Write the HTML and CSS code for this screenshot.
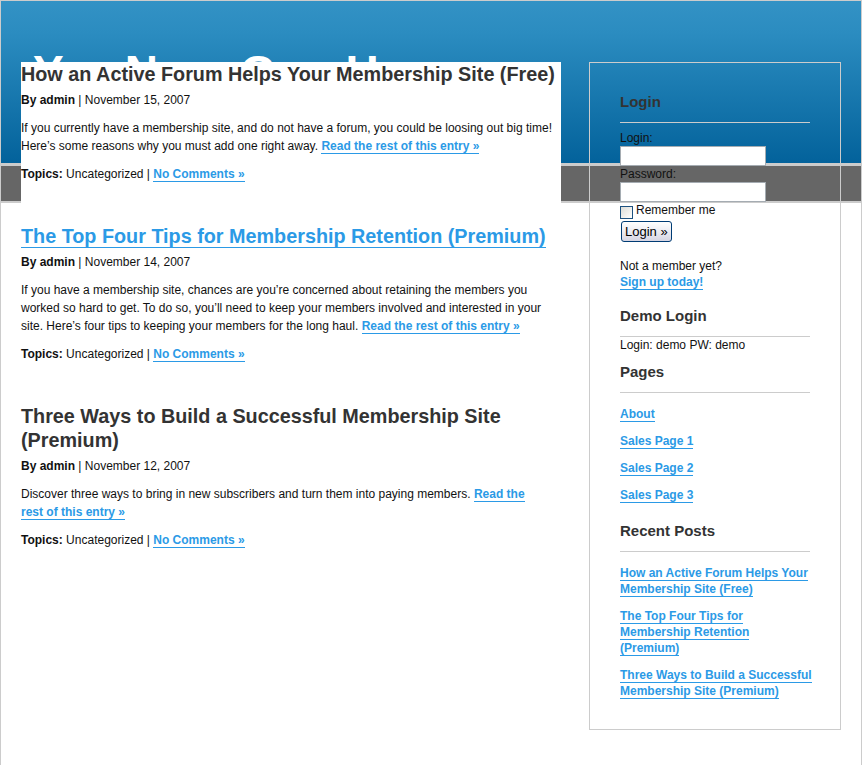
FILE: index.html
```html
<!DOCTYPE html>
<html lang="en">
<head>
<meta charset="utf-8">
<title>Your Name Goes Here</title>
<link rel="stylesheet" href="styles.css">
</head>
<body>
<div class="page">
  <header class="masthead">
    <div class="brand">
      <h1 class="site-title">Your Name Goes Here</h1>
    </div>
    <div class="navbar"></div>
  </header>

  <div class="main">
    <div class="content">
      <div class="post">
        <h2 class="post-title">How an Active Forum Helps Your Membership Site (Free)</h2>
        <p class="post-meta"><b>By admin</b> | November 15, 2007</p>
        <p class="post-excerpt">If you currently have a membership site, and do not have a forum, you could be loosing out big time! Here’s some reasons why you must add one right away. <a href="#">Read the rest of this entry »</a></p>
        <p class="post-topics"><b>Topics:</b> Uncategorized | <a href="#">No Comments »</a></p>
      </div>

      <div class="post">
        <h2 class="post-title"><a href="#">The Top Four Tips for Membership Retention (Premium)</a></h2>
        <p class="post-meta"><b>By admin</b> | November 14, 2007</p>
        <p class="post-excerpt">If you have a membership site, chances are you’re concerned about retaining the members you worked so hard to get. To do so, you’ll need to keep your members involved and interested in your site. Here’s four tips to keeping your members for the long haul. <a href="#">Read the rest of this entry »</a></p>
        <p class="post-topics"><b>Topics:</b> Uncategorized | <a href="#">No Comments »</a></p>
      </div>

      <div class="post">
        <h2 class="post-title">Three Ways to Build a Successful Membership Site (Premium)</h2>
        <p class="post-meta"><b>By admin</b> | November 12, 2007</p>
        <p class="post-excerpt">Discover three ways to bring in new subscribers and turn them into paying members. <a href="#">Read the<br>rest of this entry »</a></p>
        <p class="post-topics"><b>Topics:</b> Uncategorized | <a href="#">No Comments »</a></p>
      </div>
    </div>

    <aside class="sidebar">
      <section class="widget widget-login">
        <h3 class="widget-title">Login</h3>
        <form class="login-form">
          <label class="field-label" for="log">Login:</label>
          <input class="field" type="text" id="log">
          <label class="field-label" for="pwd">Password:</label>
          <input class="field" type="password" id="pwd">
          <div class="remember">
            <span class="checkbox"></span>
            <span>Remember me</span>
          </div>
          <button class="login-btn" type="button">Login »</button>
        </form>
        <p class="join">Not a member yet?<br><a href="#">Sign up today!</a></p>
      </section>

      <section class="widget widget-demo">
        <h3 class="widget-title">Demo Login</h3>
        <p class="demo-text">Login: demo PW: demo</p>
      </section>

      <section class="widget widget-pages">
        <h3 class="widget-title">Pages</h3>
        <ul class="link-list">
          <li><a href="#">About</a></li>
          <li><a href="#">Sales Page 1</a></li>
          <li><a href="#">Sales Page 2</a></li>
          <li><a href="#">Sales Page 3</a></li>
        </ul>
      </section>

      <section class="widget widget-recent">
        <h3 class="widget-title">Recent Posts</h3>
        <ul class="link-list recent-list">
          <li><a href="#">How an Active Forum Helps Your Membership Site (Free)</a></li>
          <li><a href="#">The Top Four Tips for Membership Retention<br>(Premium)</a></li>
          <li><a href="#">Three Ways to Build a Successful Membership Site (Premium)</a></li>
        </ul>
      </section>
    </aside>
  </div>
</div>
</body>
</html>
```

FILE: styles.css
```css
* { box-sizing: border-box; }

body {
  margin: 0;
  background: #fff;
  font-family: "Liberation Sans", Arial, sans-serif;
  font-size: 12px;
  color: #111;
}

a {
  color: #2b9ae6;
  font-weight: bold;
  text-decoration: none;
  border-bottom: 1px solid #2b9ae6;
}

.page {
  border: 1px solid #ccc;
  border-bottom: none;
  min-height: 765px;
}

/* header */
.brand {
  height: 162px;
  background: linear-gradient(#3392c5, #2b8cc0 20%, #03629b);
  overflow: hidden;
}

.site-title {
  margin: 0;
  padding: 48px 0 0 32px;
  font-size: 46px;
  line-height: 46px;
  letter-spacing: -4.5px;
  font-weight: bold;
  color: #fff;
}

.navbar {
  height: 40px;
  background: #666;
  border-top: 3px solid #ccc;
  border-bottom: 2px solid #ccc;
}

/* main */
.main {
  display: flex;
  align-items: flex-start;
  margin-top: -141px;
  padding-left: 20px;
}

.content {
  width: 540px;
  background: #fff;
}

.post { margin-bottom: 41px; }

.post-title {
  margin: 0 0 5px;
  font-size: 19.8px;
  line-height: 24px;
  font-weight: bold;
  color: #333;
}

.post-meta,
.post-excerpt,
.post-topics {
  margin: 0 0 10px;
  line-height: 18px;
}

.post-topics { margin-bottom: 0; }

/* sidebar */
.sidebar {
  margin-left: 28px;
  width: 252px;
  padding: 30px 30px 19px;
  border: 1px solid #ccc;
}

.widget-title {
  margin: 0;
  padding-bottom: 11px;
  border-bottom: 1px solid #ccc;
  font-size: 15px;
  line-height: 18px;
  font-weight: bold;
  color: #333;
}

.login-form { margin-top: 7px; }

.field-label {
  display: block;
  line-height: 16px;
}

.field {
  display: block;
  width: 146px;
  height: 20px;
  margin: 0;
  padding: 1px 2px;
  border: 1px solid #a5acb2;
  background: #fff;
  font: 12px "Liberation Sans", Arial, sans-serif;
}

.remember {
  display: flex;
  align-items: flex-start;
  gap: 3px;
  line-height: 16px;
}

.checkbox {
  width: 13px;
  height: 13px;
  margin-top: 4px;
  border: 1px solid #1c5180;
  background: linear-gradient(135deg, #dcdcd7, #fff);
}

.login-btn {
  display: block;
  height: 21px;
  margin: 2px 0 0 1px;
  padding: 0 3px;
  border: 1px solid #003c74;
  border-radius: 3px;
  background: linear-gradient(#fff, #f0f0f5 40%, #d6d5e3);
  font: 13px "Liberation Sans", Arial, sans-serif;
  color: #000;
}

.join {
  margin: 16px 0 0;
  line-height: 16px;
}

.widget-demo { margin-top: 17px; }

.demo-text {
  margin: 0;
  line-height: 16px;
}

.widget-pages { margin-top: 10px; }
.widget-recent { margin-top: 19px; }

.link-list {
  margin: 13px -3px 0 0;
  padding: 0;
  list-style: none;
}

.link-list li {
  margin-bottom: 11px;
  line-height: 16px;
}
```
